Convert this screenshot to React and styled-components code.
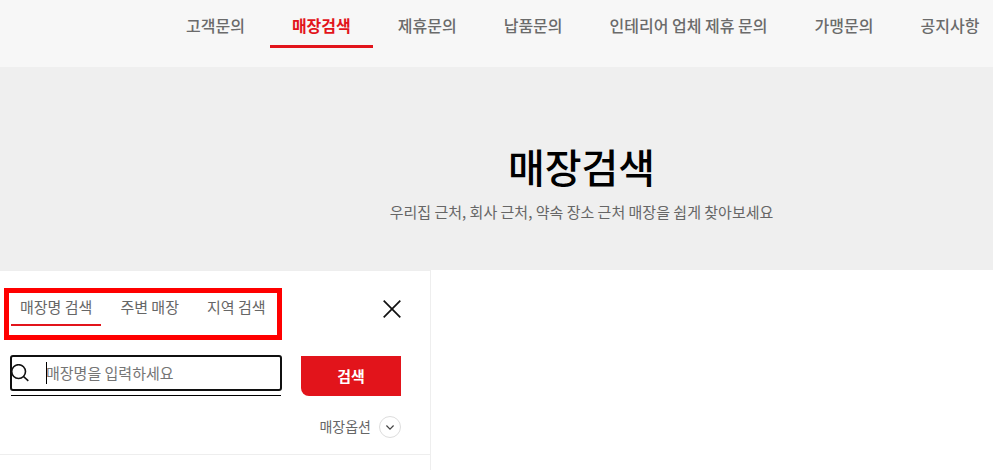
import React, { useState } from 'react'
import styled, { createGlobalStyle } from 'styled-components'

const menus = ['고객문의', '매장검색', '제휴문의', '납품문의', '인테리어 업체 제휴 문의', '가맹문의', '공지사항']
const tabs = ['매장명 검색', '주변 매장', '지역 검색']

export default function App() {
    const [tab, setTab] = useState(0)
    const [keyword, setKeyword] = useState('')

  return (
    <>
    <GlobalStyle />
    <Nav>
        {menus.map((menu) => (
            <NavLink key={menu} href='#' $active={menu === '매장검색'}>{menu}</NavLink>
        ))}
    </Nav>
    <Hero>
        <h1>매장검색</h1>
        <p>우리집 근처, 회사 근처, 약속 장소 근처 매장을 쉽게 찾아보세요</p>
    </Hero>
    <StoreArea>
        <Panel>
            <PanelHead>
                <TabList>
                    {tabs.map((name, i) => (
                        <Tab key={name} type='button' $active={tab === i} onClick={() => setTab(i)}>{name}</Tab>
                    ))}
                </TabList>
                <CloseButton type='button' aria-label='닫기'>
                    <svg width='18' height='18' viewBox='0 0 18 18' fill='none' stroke='#111' strokeWidth='1.7'>
                        <path d='M.7.7l16.6 16.6M17.3.7L.7 17.3' />
                    </svg>
                </CloseButton>
            </PanelHead>
            <SearchForm onSubmit={(e) => e.preventDefault()}>
                <SearchField $empty={!keyword}>
                    <svg width='20' height='20' viewBox='0 0 20 20' fill='none' stroke='#111' strokeWidth='1.6'>
                        <circle cx='7.6' cy='7.6' r='6.9' />
                        <path d='M12.5 12.5l4.8 4.3' />
                    </svg>
                    <input
                        type='text'
                        aria-label='매장명'
                        placeholder='매장명을 입력하세요'
                        value={keyword}
                        onChange={(e) => setKeyword(e.target.value)}
                    />
                </SearchField>
                <SearchButton type='submit'>검색</SearchButton>
            </SearchForm>
            <OptionRow>
                <OptionButton type='button'>
                    매장옵션
                    <span>
                        <svg width='8' height='5' viewBox='0 0 8 5' fill='none' stroke='#444' strokeWidth='1.2'>
                            <path d='M.4.5L4 4.1 7.6.5' />
                        </svg>
                    </span>
                </OptionButton>
            </OptionRow>
        </Panel>
        <MapArea />
    </StoreArea>
    </>
  )
}

const GlobalStyle = createGlobalStyle`
    * {
        box-sizing: border-box;
    }
    body {
        margin: 0;
        background-color: #ffffff;
        color: #666666;
        font-family: 'Noto Sans CJK KR', sans-serif;
        overflow-x: hidden;
    }
    h1, p {
        margin: 0;
    }
    button, input {
        padding: 0;
        border: 0;
        background: none;
        color: inherit;
        font-family: inherit;
    }
    button {
        cursor: pointer;
    }
    svg {
        display: block;
    }
`
const Nav = styled.nav`
    display: flex;
    gap: 3px;
    padding: 4px 0 19px 164px;
    background-color: #f7f7f7;
`
const NavLink = styled.a`
    flex: none;
    padding: 10px 22px 8px;
    border-bottom: 3px solid ${({ $active }) => ($active ? '#e2141b' : 'transparent')};
    color: ${({ $active }) => ($active ? '#e2141b' : '#6b6b6b')};
    font-size: 16px;
    font-weight: ${({ $active }) => ($active ? 700 : 500)};
    line-height: 23px;
    text-decoration: none;
    white-space: nowrap;
`
const Hero = styled.header`
    padding: 69px 0 47px 170px;
    background-color: #efefef;
    text-align: center;

    h1 {
        color: #000000;
        font-size: 40px;
        font-weight: 500;
        line-height: 60px;
    }
    p {
        margin-top: 5px;
        font-size: 15px;
        line-height: 22px;
    }
`
const StoreArea = styled.main`
    display: flex;
    min-height: 200px;
`
const Panel = styled.section`
    flex: 0 0 431px;
    border-top: 1px solid #eeeeee;
    border-right: 1px solid #eeeeee;
`
const MapArea = styled.section`
    flex: 1;
`
const PanelHead = styled.div`
    display: flex;
    justify-content: space-between;
    align-items: flex-start;
    padding: 22px 29px 0 11px;
`
const TabList = styled.div`
    position: relative;
    display: flex;
    gap: 10px;

    /* highlight frame over the tabs */
    &::after {
        content: '';
        position: absolute;
        inset: -5px -7px -14px;
        border: 5px solid #ff0000;
        pointer-events: none;
    }
`
const Tab = styled.button`
    padding: 3px 9px 6px;
    border-bottom: 2px solid ${({ $active }) => ($active ? '#e2141b' : 'transparent')};
    font-size: 15px;
    line-height: 22px;
`
const CloseButton = styled.button`
    margin-top: 7px;
`
const SearchForm = styled.form`
    display: flex;
    gap: 20px;
    padding: 30px 29px 0 11px;
`
const SearchField = styled.div`
    position: relative;
    flex: 1;
    height: 40px;
    border-bottom: 1px solid #000000;

    svg {
        position: absolute;
        top: 8px;
        left: 0;
    }
    /* text cursor */
    &::before {
        content: '';
        display: ${({ $empty }) => ($empty ? 'block' : 'none')};
        position: absolute;
        top: 6px;
        left: 35px;
        width: 1px;
        height: 22px;
        background-color: #000000;
    }
    input {
        display: block;
        width: 100%;
        height: 34px;
        padding: 0 0 2px 35px;
        border-radius: 2px;
        outline: 2px solid #101010;
        outline-offset: -1px;
        font-size: 15px;
    }
    input::placeholder {
        color: #757575;
        opacity: 1;
    }
`
const SearchButton = styled.button`
    width: 100px;
    height: 40px;
    padding-bottom: 2px;
    border-bottom-left-radius: 8px;
    background-color: #e2141b;
    color: #ffffff;
    font-size: 15px;
    font-weight: 700;
`
const OptionRow = styled.div`
    display: flex;
    justify-content: flex-end;
    padding: 20px 29px 16px;
    border-bottom: 1px solid #eeeeee;
`
const OptionButton = styled.button`
    display: flex;
    align-items: flex-start;
    gap: 8px;
    font-size: 14px;
    line-height: 20px;

    span {
        display: flex;
        justify-content: center;
        align-items: center;
        width: 22px;
        height: 22px;
        border: 1px solid #dddddd;
        border-radius: 50%;
    }
`
